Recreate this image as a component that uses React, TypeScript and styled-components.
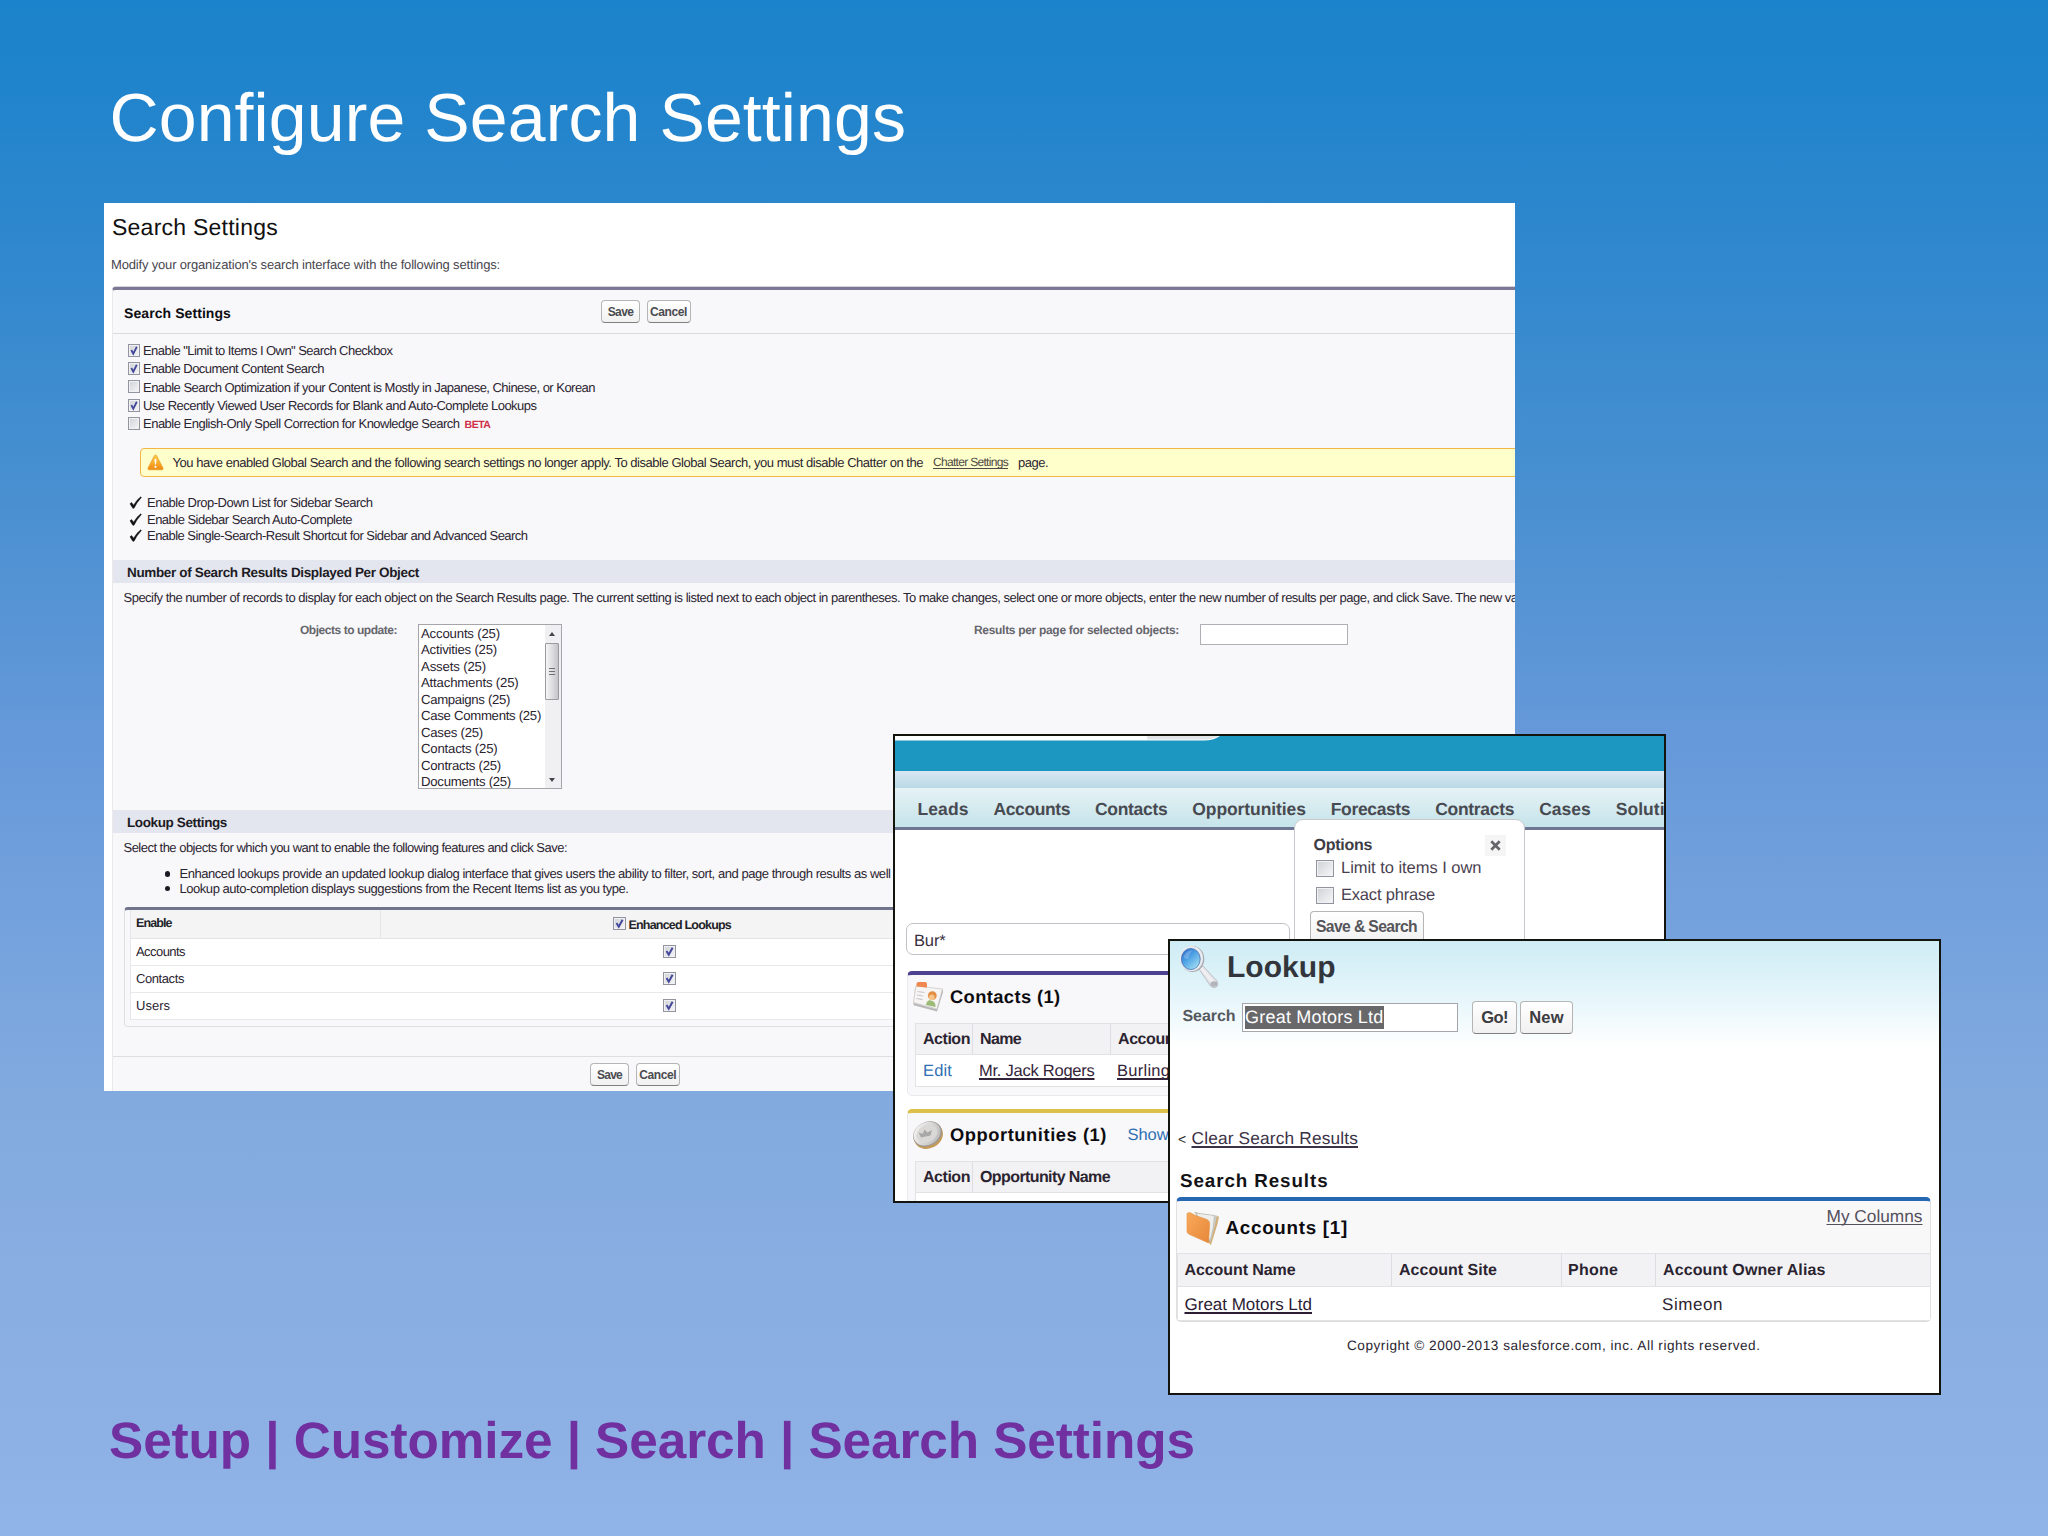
import React, { useLayoutEffect, useRef } from 'react';
import styled, { createGlobalStyle, css } from 'styled-components';

const Global = createGlobalStyle`
  html, body { margin: 0; padding: 0; }
  body {
    width: 2048px;
    height: 1536px;
    overflow: hidden;
    font-family: "Liberation Sans", Arial, sans-serif;
    text-rendering: geometricPrecision;
  }
  *, *::before, *::after { box-sizing: border-box; }
`;

/* ---------- text ---------- */

interface TextStyle {
  $size: number;
  $bold?: boolean;
  $color?: string;
  $line?: 'link' | 'thin';
  $ml?: number;
}

const TextSpan = styled.span<TextStyle>`
  display: inline-block;
  flex: none;
  white-space: pre;
  font-size: ${p => p.$size}px;
  line-height: 1.15;
  font-weight: ${p => (p.$bold ? 700 : 400)};
  color: ${p => p.$color || '#2b2430'};
  margin-left: ${p => p.$ml || 0}px;
  ${p =>
    p.$line &&
    css`
      text-decoration: underline;
      text-decoration-thickness: ${p.$line === 'link' ? 1.5 : 1}px;
      text-underline-offset: 1.5px;
      text-decoration-skip-ink: none;
    `}
`;

interface TextProps {
  size: number;
  w?: number;
  bold?: boolean;
  color?: string;
  line?: 'link' | 'thin';
  ml?: number;
  children: string;
}

/* Tracks its letters so that the run fills exactly `w` pixels. */
function Text({ size, w, bold, color, line, ml, children }: TextProps) {
  const ref = useRef<HTMLSpanElement>(null);
  useLayoutEffect(() => {
    const el = ref.current;
    if (!el || !w) return;
    el.style.letterSpacing = '0px';
    const natural = el.getBoundingClientRect().width;
    el.style.letterSpacing = `${(w - natural) / children.length}px`;
  }, [w, size, children]);
  return (
    <TextSpan ref={ref} $size={size} $bold={bold} $color={color} $line={line} $ml={ml}>
      {children}
    </TextSpan>
  );
}

/* ---------- slide ---------- */

const Slide = styled.main`
  position: relative;
  width: 2048px;
  height: 1536px;
  overflow: hidden;
  display: flex;
  flex-direction: column;
  background: linear-gradient(
    #1b83cb 0px,
    #1f84cc 80px,
    #2a86cd 190px,
    #478fd0 480px,
    #6699da 740px,
    #82aadf 1100px,
    #8cb0e4 1400px,
    #90b4e8 1536px
  );
`;

const SlideTitle = styled.header`
  height: 203px;
  padding: 79px 0 0 109.5px;
`;

const SlideFooter = styled.footer`
  margin-top: 321px;
  padding-left: 109px;
`;

/* ---------- shared pieces ---------- */

const Row = styled.div<{ $h: number; $mt?: number; $pl?: number }>`
  display: flex;
  align-items: center;
  flex: none;
  height: ${p => p.$h}px;
  margin-top: ${p => p.$mt || 0}px;
  padding-left: ${p => p.$pl || 0}px;
`;

const Button = styled.button<{ $w: number; $h: number; $ml?: number }>`
  display: flex;
  align-items: center;
  justify-content: center;
  flex: none;
  width: ${p => p.$w}px;
  height: ${p => p.$h}px;
  margin: 0 0 0 ${p => p.$ml || 0}px;
  padding: 0;
  font-family: inherit;
  border: 1px solid #b5b5b5;
  border-bottom: 1.5px solid #7f7f7f;
  border-radius: 4px;
  background: linear-gradient(#ffffff, #f1f1f1);
`;

const Box = styled.span<{ $w: number; $h: number; $ml?: number }>`
  display: flex;
  flex: none;
  width: ${p => p.$w}px;
  height: ${p => p.$h}px;
  margin-left: ${p => p.$ml || 0}px;
  border: 1.5px solid #9295a0;
  background: linear-gradient(135deg, #cfd1d6, #f7f7f8);
  box-shadow: inset 0 0 0 1px #f1f1f4;
`;

function CheckBox({ checked, w = 12, h = 13, ml }: { checked?: boolean; w?: number; h?: number; ml?: number }) {
  return (
    <Box $w={w} $h={h} $ml={ml}>
      {checked && (
        <svg viewBox="0 0 10 10" width="100%" height="100%" preserveAspectRatio="none">
          <path d="M2.3 4.6 L4.3 8 L7.8 1.6" fill="none" stroke="#43489a" strokeWidth="1.8" />
        </svg>
      )}
    </Box>
  );
}

/* ---------- search settings sheet ---------- */

const Options = styled.div`
  flex: 1;
  display: flex;
  flex-direction: column;
  padding-left: 2px;
  overflow: hidden;
`;

const Sheet = styled.section`
  width: 1411px;
  height: 888px;
  flex: none;
  margin-left: 104px;
  overflow: hidden;
  background: #fff;
  display: flex;
  flex-direction: column;

  ${TextSpan} {
    padding-top: 2px;
  }

  ${Options} ${TextSpan} {
    padding-top: 0;
  }
`;

const SettingsBlock = styled.div`
  margin: 7px 0 0 8px;
  flex: 1;
  display: flex;
  flex-direction: column;
  background: #f8f8fa;
  border-top: 3px solid #7b7794;
  border-left: 1px solid #ebe9ec;
  border-top-left-radius: 4px;
  box-shadow: 0 -0.5px 0 #a9a6ba;
`;

const BlockHeader = styled.div`
  display: flex;
  align-items: center;
  flex: none;
  height: 43.5px;
  padding: 1px 0 0 11px;
  border-bottom: 1px solid #dcdcde;
`;

const Warning = styled.div`
  display: flex;
  align-items: center;
  flex: none;
  height: 28.5px;
  margin: 15px -6px 0 27px;
  padding-left: 5.5px;
  border: 1.5px solid #f3b548;
  border-radius: 4px;
  background: #ffffcb;
`;

const Bar = styled.div<{ $mt: number }>`
  display: flex;
  align-items: center;
  flex: none;
  height: 23px;
  margin-top: ${p => p.$mt}px;
  padding-left: 14px;
  background: #e3e6ee;
`;

const Form = styled.div`
  display: flex;
  align-items: flex-start;
  flex: none;
  height: 165px;
  margin-top: 13px;
`;

const FormLabel = styled.label<{ $w: number }>`
  width: ${p => p.$w}px;
  margin-top: -2px;
  display: flex;
  justify-content: flex-end;
  flex: none;
`;

const ListBox = styled.div`
  display: flex;
  flex: none;
  width: 143.5px;
  height: 165px;
  margin-left: 21px;
  border: 1px solid #a6a6aa;
  background: #fff;
`;

const ScrollTrack = styled.div`
  width: 16px;
  padding-right: 1px;
  display: flex;
  flex-direction: column;
  align-items: center;
  background: #f0f0f2;
`;

const ScrollThumb = styled.div`
  display: flex;
  flex-direction: column;
  align-items: center;
  justify-content: center;
  gap: 1.5px;
  width: 14px;
  height: 57px;
  margin-bottom: auto;
  border: 1px solid #9b9b9f;
  border-radius: 1px;
  background: linear-gradient(90deg, #f5f5f6, #dcdcdf 55%, #c4c4c9);
`;

const Grip = styled.i`
  width: 6px;
  height: 1.5px;
  background: #6f6f76;
`;

const Arrow = styled.i<{ $down?: boolean }>`
  width: 0;
  height: 0;
  margin: ${p => (p.$down ? '0 0 6px' : '7px 0 7px')};
  border: 3.2px solid transparent;
  ${p => (p.$down ? 'border-top: 4px solid #44444a; border-bottom: 0;' : 'border-bottom: 4px solid #44444a; border-top: 0;')}
`;

const NumberField = styled.div`
  width: 148px;
  height: 20.5px;
  margin-left: 21px;
  flex: none;
  border: 1.5px solid #b1afb6;
  background: #fff;
`;

const Bullet = styled.i`
  width: 5.5px;
  height: 5.5px;
  margin-right: 9.5px;
  flex: none;
  border-radius: 50%;
  background: #1c1a22;
`;

const LookupTable = styled.div`
  margin: 11.4px -4px 0 11px;
  flex: none;
  height: 120px;
  padding-left: 5px;
  border: 1px solid #dfdfe2;
  border-top: 3px solid #70748c;
  border-radius: 4px;
`;

const LookupRow = styled.div<{ $head?: boolean }>`
  display: grid;
  grid-template-columns: 250px 1fr;
  height: ${p => (p.$head ? 28.5 : 27)}px;
  align-items: stretch;
  background: ${p => (p.$head ? '#f3f4f3' : '#fff')};
  border-bottom: 1px solid ${p => (p.$head ? '#e3e4e4' : '#e9e9eb')};
  border-left: 1px solid #e6e6e8;
`;

const LookupCell = styled.div<{ $sep?: boolean }>`
  display: flex;
  align-items: center;
  padding: 0 0 ${p => (p.$sep ? 3 : 0)}px 5px;
  border-right: ${p => (p.$sep ? '1px solid #e6e6e7' : '0')};
`;

const SheetFooter = styled.div`
  display: flex;
  align-items: center;
  flex: 1;
  margin-top: 29px;
  padding: 1px 0 0 477px;
  border-top: 1px solid #dedee0;
`;

const WarningIcon = () => (
  <svg width="17" height="17" viewBox="0 0 17 17">
    <defs>
      <linearGradient id="warn" x1="0" y1="0" x2="0" y2="1">
        <stop offset="0" stopColor="#ffd04a" />
        <stop offset="1" stopColor="#f08a12" />
      </linearGradient>
    </defs>
    <path d="M8.5 1 Q9.2 1 9.7 2 L16 14 Q16.5 15.7 15 15.8 H2 Q.5 15.7 1 14 L7.3 2 Q7.8 1 8.5 1z" fill="url(#warn)" stroke="#e39a24" strokeWidth=".7" />
    <path d="M7.5 5h2l-.4 5.6h-1.2z" fill="#fff" />
    <circle cx="8.5" cy="12.8" r="1.1" fill="#fff" />
  </svg>
);

const Tick = () => (
  <svg width="13" height="13" viewBox="0 0 13 13">
    <path d="M1 7.8 L2.6 6.6 L4.6 9.2 Q7.4 4 11.8 .8 L12.4 1.4 Q8 6 5 12.2 L3.8 12.2z" fill="#111" stroke="#111" strokeWidth=".5" />
  </svg>
);

const toggles: [string, number, boolean, string?][] = [
  ['Enable "Limit to Items I Own" Search Checkbox', 249.5, true],
  ['Enable Document Content Search', 181, true],
  ['Enable Search Optimization if your Content is Mostly in Japanese, Chinese, or Korean', 452, false],
  ['Use Recently Viewed User Records for Blank and Auto-Complete Lookups', 393.5, true],
  ['Enable English-Only Spell Correction for Knowledge Search', 316.5, false, 'BETA'],
];

const legacy: [string, number][] = [
  ['Enable Drop-Down List for Sidebar Search', 225.5],
  ['Enable Sidebar Search Auto-Complete', 205],
  ['Enable Single-Search-Result Shortcut for Sidebar and Advanced Search', 380.5],
];

const objects: [string, number][] = [
  ['Accounts (25)', 79],
  ['Activities (25)', 76],
  ['Assets (25)', 65],
  ['Attachments (25)', 97.5],
  ['Campaigns (25)', 89],
  ['Case Comments (25)', 120],
  ['Cases (25)', 62],
  ['Contacts (25)', 76.5],
  ['Contracts (25)', 80],
  ['Documents (25)', 90],
];

function SearchSettings() {
  return (
    <Sheet>
      <Row $h={46} $pl={8}>
        <Text size={23} w={166} color="#111">Search Settings</Text>
      </Row>
      <Row $h={31} $pl={7}>
        <Text size={13} w={389} color="#48464e">Modify your organization's search interface with the following settings:</Text>
      </Row>
      <SettingsBlock>
        <BlockHeader>
          <Text size={14} w={107} bold color="#0e0e12">Search Settings</Text>
          <Button $w={39} $h={23} $ml={370}>
            <Text size={12} w={25.5} bold color="#4b4b50">Save</Text>
          </Button>
          <Button $w={44} $h={23} $ml={6.5}>
            <Text size={12} w={37} bold color="#4b4b50">Cancel</Text>
          </Button>
        </BlockHeader>
        {toggles.map(([label, w, on, tag], i) => (
          <Row key={label} $h={18.45} $mt={i ? 0 : 7.4} $pl={14.5}>
            <CheckBox checked={on} />
            <Text size={13} w={w} ml={3.5}>{label}</Text>
            {tag && <Text size={10.5} w={26} ml={5} bold color="#cf2f47">{tag}</Text>}
          </Row>
        ))}
        <Warning>
          <WarningIcon />
          <Text size={13} w={750.5} ml={9}>You have enabled Global Search and the following search settings no longer apply. To disable Global Search, you must disable Chatter on the</Text>
          <Text size={12} w={75} ml={10} line="thin" color="#4d4a45">Chatter Settings</Text>
          <Text size={13} w={30} ml={10}>page.</Text>
        </Warning>
        {legacy.map(([label, w], i) => (
          <Row key={label} $h={16.5} $mt={i ? 0 : 17.7} $pl={16}>
            <Tick />
            <Text size={13} w={w} ml={5}>{label}</Text>
          </Row>
        ))}
        <Bar $mt={16.3}>
          <Text size={13.5} w={292} bold color="#1d1b24">Number of Search Results Displayed Per Object</Text>
        </Bar>
        <Row $h={28} $pl={10.5}>
          <Text size={13} w={1394}>Specify the number of records to display for each object on the Search Results page. The current setting is listed next to each object in parentheses. To make changes, select one or more objects, enter the new number of results per page, and click Save. The new va</Text>
        </Row>
        <Form>
          <FormLabel $w={284}>
            <Text size={12} w={97} bold color="#66666c">Objects to update:</Text>
          </FormLabel>
          <ListBox>
            <Options>
              {objects.map(([label, w]) => (
                <Row key={label} $h={16.5}>
                  <Text size={13.2} w={w}>{label}</Text>
                </Row>
              ))}
            </Options>
            <ScrollTrack>
              <Arrow />
              <ScrollThumb>
                <Grip />
                <Grip />
                <Grip />
              </ScrollThumb>
              <Arrow $down />
            </ScrollTrack>
          </ListBox>
          <FormLabel $w={617.5}>
            <Text size={12} w={205} bold color="#66666c">Results per page for selected objects:</Text>
          </FormLabel>
          <NumberField />
        </Form>
        <Bar $mt={21.4}>
          <Text size={13.5} w={100} bold color="#1d1b24">Lookup Settings</Text>
        </Bar>
        <Row $h={29} $pl={10.5}>
          <Text size={13} w={443.5}>Select the objects for which you want to enable the following features and click Save:</Text>
        </Row>
        <Row $h={14.7} $mt={4} $pl={51.5}>
          <Bullet />
          <Text size={13} w={711}>Enhanced lookups provide an updated lookup dialog interface that gives users the ability to filter, sort, and page through results as well</Text>
        </Row>
        <Row $h={14.7} $pl={51.5}>
          <Bullet />
          <Text size={13} w={449}>Lookup auto-completion displays suggestions from the Recent Items list as you type.</Text>
        </Row>
        <LookupTable>
          <LookupRow $head>
            <LookupCell $sep>
              <Text size={12.5} w={35.5} bold color="#222228">Enable</Text>
            </LookupCell>
            <LookupCell>
              <CheckBox checked w={13} h={13} ml={226.5} />
              <Text size={12.5} w={102.5} ml={3} bold color="#222228">Enhanced Lookups</Text>
            </LookupCell>
          </LookupRow>
          {([['Accounts', 49], ['Contacts', 48], ['Users', 34]] as [string, number][]).map(([label, w]) => (
            <LookupRow key={label}>
              <LookupCell>
                <Text size={13} w={w}>{label}</Text>
              </LookupCell>
              <LookupCell>
                <CheckBox checked w={13} h={13} ml={277} />
              </LookupCell>
            </LookupRow>
          ))}
        </LookupTable>
        <SheetFooter>
          <Button $w={39} $h={23}>
            <Text size={12} w={25} bold color="#4b4b50">Save</Text>
          </Button>
          <Button $w={43.5} $h={23} $ml={7}>
            <Text size={12} w={37} bold color="#4b4b50">Cancel</Text>
          </Button>
        </SheetFooter>
      </SettingsBlock>
    </Sheet>
  );
}

/* ---------- global search window ---------- */

const Window = styled.section<{ $x: number; $y: number; $w: number; $h: number }>`
  position: absolute;
  left: ${p => p.$x}px;
  top: ${p => p.$y}px;
  width: ${p => p.$w}px;
  height: ${p => p.$h}px;
  border: 2px solid #14140f;
  background: #fff;
  overflow: hidden;
  display: flex;
  flex-direction: column;
`;

const Masthead = styled.div`
  flex: none;
  height: 35px;
  background: #1b97c1;
  svg { display: block; }
`;

const Strip = styled.div`
  flex: none;
  height: 17px;
  background: linear-gradient(#d8e7f2, #b9d9e5);
`;

const Tabs = styled.nav`
  display: flex;
  align-items: center;
  gap: 25px;
  flex: none;
  height: 41.5px;
  padding: 3px 0 0 22.5px;
  background: linear-gradient(#e6f2f5, #c5e4ea);
  border-bottom: 3.5px solid #6f7694;
`;

const QueryField = styled.div`
  display: flex;
  align-items: center;
  flex: none;
  width: 384px;
  height: 32px;
  margin: 93.5px 0 0 11px;
  padding: 4px 0 0 7px;
  border: 1.5px solid #c2bfc7;
  border-radius: 7px;
`;

const Card = styled.div<{ $accent: string; $mt: number }>`
  flex: none;
  height: 124.5px;
  margin: ${p => p.$mt}px -10px 0 12px;
  padding-left: 7px;
  background: #f8f7f9;
  border: 1px solid #e9e8eb;
  border-top: 4px solid ${p => p.$accent};
  border-radius: 5px;
`;

const CardHead = styled.div`
  display: flex;
  align-items: center;
  height: 48px;
  padding: 0 0 4px;
  margin-left: -3px;
  svg { flex: none; }
`;

const GridRow = styled.div<{ $cols: string; $head?: boolean; $h: number }>`
  display: grid;
  grid-template-columns: ${p => p.$cols};
  height: ${p => p.$h}px;
  border-left: 1px solid #e2e2e5;
  border-top: ${p => (p.$head ? '1px solid #e2e2e5' : '0')};
  border-bottom: 1px solid #e2e2e5;
  background: ${p => (p.$head ? '#f2f2f4' : '#fff')};
`;

const Cell = styled.div<{ $sep?: boolean; $pl?: number }>`
  display: flex;
  align-items: center;
  padding: 2.5px 0 0 ${p => p.$pl ?? 7}px;
  border-right: ${p => (p.$sep ? '1px solid #dedee2' : '0')};
  min-width: 0;
`;

const Popover = styled.div`
  position: absolute;
  left: 399px;
  top: 82.5px;
  width: 231px;
  height: 140px;
  padding: 15.5px 0 0 14px;
  border: 1.5px solid #c9c8ce;
  border-radius: 9px 9px 0 0;
  background: #fff;
  display: flex;
  flex-direction: column;
`;

const CloseButton = styled.span`
  display: flex;
  align-items: center;
  justify-content: center;
  width: 21px;
  height: 21px;
  margin-left: 113px;
  background: #f5f5f6;
`;

const OptionsLabel = styled.span`
  display: flex;
  padding-top: 2px;
`;

const ContactIcon = () => (
  <svg width="32" height="32" viewBox="0 0 32 32">
    <path d="M3 6 L31 9 L25 30 L1 23z" fill="#d7d6d6" />
    <path d="M4 5 L30.5 8 L25 28 L1.5 21.5z" fill="#f6f5f4" stroke="#cfcdcd" strokeWidth=".8" />
    <path d="M25 28.6 L1.5 22.3 L1.7 24.3 L25 30.5 L31 11 L30.5 8z" fill="#b9b8b8" />
    <path d="M4.5 3 Q4.5 1.2 6.5 1 H13 Q15 1 15 3 V6.5 L4.5 5.6z" fill="#ee8850" />
    <path d="M5.5 10.5l7 1M5 14l6 1M4.5 17.5l6 1.2" stroke="#c9c9cd" strokeWidth="1.2" />
    <path d="M14 24 Q15 18.5 19 19.5 Q24 20.5 23.5 26z" fill="#9dbb77" />
    <circle cx="20.3" cy="14.6" r="4.4" fill="#e38d45" />
    <circle cx="19.8" cy="16.2" r="2.8" fill="#f5c58a" />
  </svg>
);

const CoinIcon = () => (
  <svg width="32" height="30" viewBox="0 0 32 30">
    <defs>
      <linearGradient id="coin" x1="0" y1="0" x2="1" y2="1">
        <stop offset="0" stopColor="#fbfaf9" />
        <stop offset="1" stopColor="#b5b3b3" />
      </linearGradient>
    </defs>
    <ellipse cx="16.5" cy="16" rx="15" ry="12.3" transform="rotate(-28 16.5 16)" fill="#c49a58" />
    <ellipse cx="15.5" cy="14" rx="15" ry="12" transform="rotate(-28 15.5 14)" fill="#9c9894" />
    <ellipse cx="15" cy="13.6" rx="14" ry="11.2" transform="rotate(-28 15 13.6)" fill="url(#coin)" />
    <ellipse cx="15" cy="13.6" rx="11" ry="8.4" transform="rotate(-28 15 13.6)" fill="#d9d8d7" />
    <path d="M9 17.5 L6.5 12.5 L10.8 13.8 L12.5 9.5 L15.5 12.5 L20 10 L18.5 15.5z" fill="#a9a8a9" />
  </svg>
);

const navItems: [string, number?][] = [
  ['Leads', 51],
  ['Accounts', 76.5],
  ['Contacts', 72.3],
  ['Opportunities', 113.5],
  ['Forecasts', 79.4],
  ['Contracts', 79],
  ['Cases', 51.6],
  ['Solutions', 80],
];

function GlobalSearch() {
  return (
    <Window $x={893} $y={734} $w={773} $h={469}>
      <Masthead>
        <svg width="330" height="6" viewBox="0 0 330 6">
          <path d="M0 0H325 Q318 4.6 309 4.6H0z" fill="#fdfefe" />
          <path d="M252 0H324 Q317 3.6 309 3.6H252z" fill="#e2e5e7" />
        </svg>
      </Masthead>
      <Strip />
      <Tabs>
        {navItems.map(([label, w]) => (
          <Text key={label} size={17.5} w={w} bold color="#484a52">{label}</Text>
        ))}
      </Tabs>
      <QueryField>
        <Text size={16.5} w={31.5} color="#3a2f40">Bur*</Text>
      </QueryField>
      <Card $accent="#4d4290" $mt={16}>
        <CardHead>
          <ContactIcon />
          <Text size={18.3} w={110.5} ml={6} bold color="#0c0c10">Contacts (1)</Text>
        </CardHead>
        <GridRow $head $h={32} $cols="57px 138px 1fr">
          <Cell $sep><Text size={16} w={47} bold>Action</Text></Cell>
          <Cell $sep><Text size={16} w={41} bold>Name</Text></Cell>
          <Cell><Text size={16} w={107} bold>Account Name</Text></Cell>
        </GridRow>
        <GridRow $h={31.5} $cols="57px 138px 1fr">
          <Cell><Text size={16.5} w={29} color="#2f70b4">Edit</Text></Cell>
          <Cell $pl={6}><Text size={16.5} w={115.5} line="link" color="#34243a">Mr. Jack Rogers</Text></Cell>
          <Cell $pl={6}><Text size={16.5} w={77} line="link" color="#34243a">Burlington</Text></Cell>
        </GridRow>
      </Card>
      <Card $accent="#dcc04a" $mt={13.5}>
        <CardHead>
          <CoinIcon />
          <Text size={18.3} w={157} ml={6} bold color="#0c0c10">Opportunities (1)</Text>
          <Text size={16.5} w={41} ml={20.5} color="#2f70b4">Show</Text>
        </CardHead>
        <GridRow $head $h={32} $cols="57px 1fr">
          <Cell $sep><Text size={16} w={47} bold>Action</Text></Cell>
          <Cell><Text size={16} w={130} bold>Opportunity Name</Text></Cell>
        </GridRow>
        <GridRow $h={31.5} $cols="57px 1fr" />
      </Card>
      <Popover>
        <Row $h={21} $pl={4.5}>
          <OptionsLabel>
            <Text size={16} w={58.5} bold color="#3e3c44">Options</Text>
          </OptionsLabel>
          <CloseButton>
            <svg width="11" height="11" viewBox="0 0 11 11">
              <path d="M1.3 1.3 L9.7 9.7 M9.7 1.3 L1.3 9.7" stroke="#66666a" strokeWidth="2.7" />
            </svg>
          </CloseButton>
        </Row>
        <Row $h={24} $mt={0.5} $pl={7}>
          <CheckBox w={17.5} h={17.5} />
          <Text size={16.5} w={140.5} ml={7.5} color="#4a3f50">Limit to items I own</Text>
        </Row>
        <Row $h={27} $mt={1.5} $pl={7}>
          <CheckBox w={17.5} h={17.5} />
          <Text size={16.5} w={94} ml={7.5} color="#4a3f50">Exact phrase</Text>
        </Row>
        <Row $h={32} $mt={2} $pl={0.5}>
          <Button $w={114} $h={32}>
            <Text size={15.7} w={101} bold color="#55555a">Save &amp; Search</Text>
          </Button>
        </Row>
      </Popover>
    </Window>
  );
}

/* ---------- lookup window ---------- */

const LookupTop = styled.div`
  flex: none;
  height: 107px;
  background: linear-gradient(#cfecf5, #e2f4fa 45%, #ffffff);
`;

const LookupTitle = styled.h1`
  display: flex;
  margin: 0;
  padding-top: 2px;
`;

const SelectField = styled.div`
  display: flex;
  align-items: center;
  flex: none;
  width: 216px;
  height: 29px;
  margin-left: 6.5px;
  padding-left: 2px;
  border: 1.5px solid #a3a6ab;
  background: #fff;
`;

const Selected = styled.span`
  display: flex;
  align-items: center;
  width: 138.5px;
  height: 23.5px;
  background: #68686a;
`;

const AccountsCard = styled.div`
  flex: none;
  width: 755px;
  height: 125px;
  margin: 3px 0 0 6px;
  background: #f8f8f9;
  border: 1px solid #e0e0e3;
  border-top: 4px solid #2768b3;
  border-bottom: 2px solid #dcdcde;
  border-radius: 5px;
`;

const AccountsHead = styled.div`
  display: flex;
  height: 51.5px;
  padding: 5.5px 7px 0 9px;
`;

const AccountsTitle = styled.div`
  display: flex;
  align-items: center;
  height: 43px;
  margin-right: auto;
`;

const MagnifierIcon = () => (
  <svg width="40" height="44" viewBox="0 0 40 44">
    <defs>
      <linearGradient id="lens" x1="0" y1="0" x2=".8" y2="1">
        <stop offset="0" stopColor="#2a63c8" />
        <stop offset=".45" stopColor="#4b9fe4" />
        <stop offset="1" stopColor="#a5e2f4" />
      </linearGradient>
      <linearGradient id="handle" x1="0" y1="1" x2="1" y2="0">
        <stop offset="0" stopColor="#9d9da6" />
        <stop offset=".5" stopColor="#f2f2f5" />
        <stop offset="1" stopColor="#a9a9b2" />
      </linearGradient>
    </defs>
    <path d="M20 24 L24 21 L38 36 Q40 40 37.5 42 Q34.5 44 31.5 41z" fill="url(#handle)" stroke="#a5a5ad" strokeWidth=".6" />
    <ellipse cx="35" cy="39" rx="3.4" ry="2.8" fill="#b3b3bb" />
    <ellipse cx="13.5" cy="14" rx="11.8" ry="13" fill="#a8abb2" />
    <ellipse cx="12.4" cy="13.5" rx="11.6" ry="12.6" fill="#e9edf0" />
    <ellipse cx="11.8" cy="14" rx="9.4" ry="10.6" fill="url(#lens)" stroke="#4a6fb0" strokeWidth=".8" />
    <path d="M4.5 12 Q7 5 13 5.5 Q10 9 9 14 Q6 14.5 4.5 12z" fill="#fff" opacity=".22" />
  </svg>
);

const FolderIcon = () => (
  <svg width="34" height="36" viewBox="0 0 34 36">
    <defs>
      <linearGradient id="folder" x1="0" y1="0" x2="1" y2="1">
        <stop offset="0" stopColor="#f9a95a" />
        <stop offset="1" stopColor="#e6873a" />
      </linearGradient>
    </defs>
    <path d="M9 2 L16 4 L33 6.5 L31.5 14 L25 35 L20 30z" fill="#d3b07a" />
    <path d="M8 1.5 L13.5 4 L31 5.5 Q29 16 24.5 32z" fill="#c9cbc7" />
    <path d="M10 3 L28.5 5.5 Q28 18 24 31z" fill="#eeefec" stroke="#b4b6b0" strokeWidth=".7" />
    <path d="M1 3.5 Q3 2 5 3 L9.5 5.5 L21 9.5 Q23.5 10.5 23.7 13.5 L22.5 33 L2.5 24 Q1 23 1 21z" fill="url(#folder)" stroke="#e39448" strokeWidth=".6" />
  </svg>
);

const accountCols = '214.5px 170px 94px 1fr';

function Lookup() {
  return (
    <Window $x={1167.5} $y={939} $w={773} $h={456}>
      <LookupTop>
        <Row $h={52} $pl={9}>
          <MagnifierIcon />
          <LookupTitle>
            <Text size={30} w={108.5} ml={8.5} bold color="#32363c">Lookup</Text>
          </LookupTitle>
        </Row>
        <Row $h={33} $mt={8} $pl={13}>
          <Text size={16} w={53} bold color="#55585e">Search</Text>
          <SelectField>
            <Selected>
              <Text size={18} w={138.5} color="#fff">Great Motors Ltd</Text>
            </Selected>
          </SelectField>
          <Button $w={45} $h={33} $ml={14}>
            <Text size={16.5} w={26.5} bold color="#3c3c40">Go!</Text>
          </Button>
          <Button $w={53} $h={33} $ml={3}>
            <Text size={16.5} w={34.5} bold color="#3c3c40">New</Text>
          </Button>
        </Row>
      </LookupTop>
      <Row $h={24} $mt={79} $pl={8.5}>
        <Text size={14} w={9} color="#222">&lt;</Text>
        <Text size={17.3} w={166.5} ml={4.5} line="link" color="#3b3246">Clear Search Results</Text>
      </Row>
      <Row $h={27} $mt={16} $pl={10.5}>
        <Text size={18.8} w={148.5} bold color="#121216">Search Results</Text>
      </Row>
      <AccountsCard>
        <AccountsHead>
          <AccountsTitle>
            <FolderIcon />
            <Text size={18.8} w={122.5} ml={6} bold color="#0c0c10">Accounts [1]</Text>
          </AccountsTitle>
          <Text size={17.3} w={96} line="thin" color="#55505c">My Columns</Text>
        </AccountsHead>
        <GridRow $head $h={34} $cols={accountCols}>
          <Cell $sep><Text size={16} w={111} bold>Account Name</Text></Cell>
          <Cell $sep><Text size={16} w={98} bold>Account Site</Text></Cell>
          <Cell $sep $pl={6}><Text size={16} w={50} bold>Phone</Text></Cell>
          <Cell><Text size={16} w={162.5} bold>Account Owner Alias</Text></Cell>
        </GridRow>
        <GridRow $h={34.5} $cols={accountCols}>
          <Cell><Text size={17} w={127.5} line="link" color="#2c1c34">Great Motors Ltd</Text></Cell>
          <Cell />
          <Cell />
          <Cell $pl={6}><Text size={17} w={61}>Simeon</Text></Cell>
        </GridRow>
      </AccountsCard>
      <Row $h={20} $mt={14} $pl={177.5}>
        <Text size={13.6} w={413.5} color="#2a2630">Copyright © 2000-2013 salesforce.com, inc. All rights reserved.</Text>
      </Row>
    </Window>
  );
}

export default function App() {
  return (
    <>
      <Global />
      <Slide>
        <SlideTitle>
          <Text size={68} w={796.5} color="#fff">Configure Search Settings</Text>
        </SlideTitle>
        <SearchSettings />
        <SlideFooter>
          <Text size={51.3} w={1086} bold color="#7030a0">Setup | Customize | Search | Search Settings</Text>
        </SlideFooter>
        <GlobalSearch />
        <Lookup />
      </Slide>
    </>
  );
}
